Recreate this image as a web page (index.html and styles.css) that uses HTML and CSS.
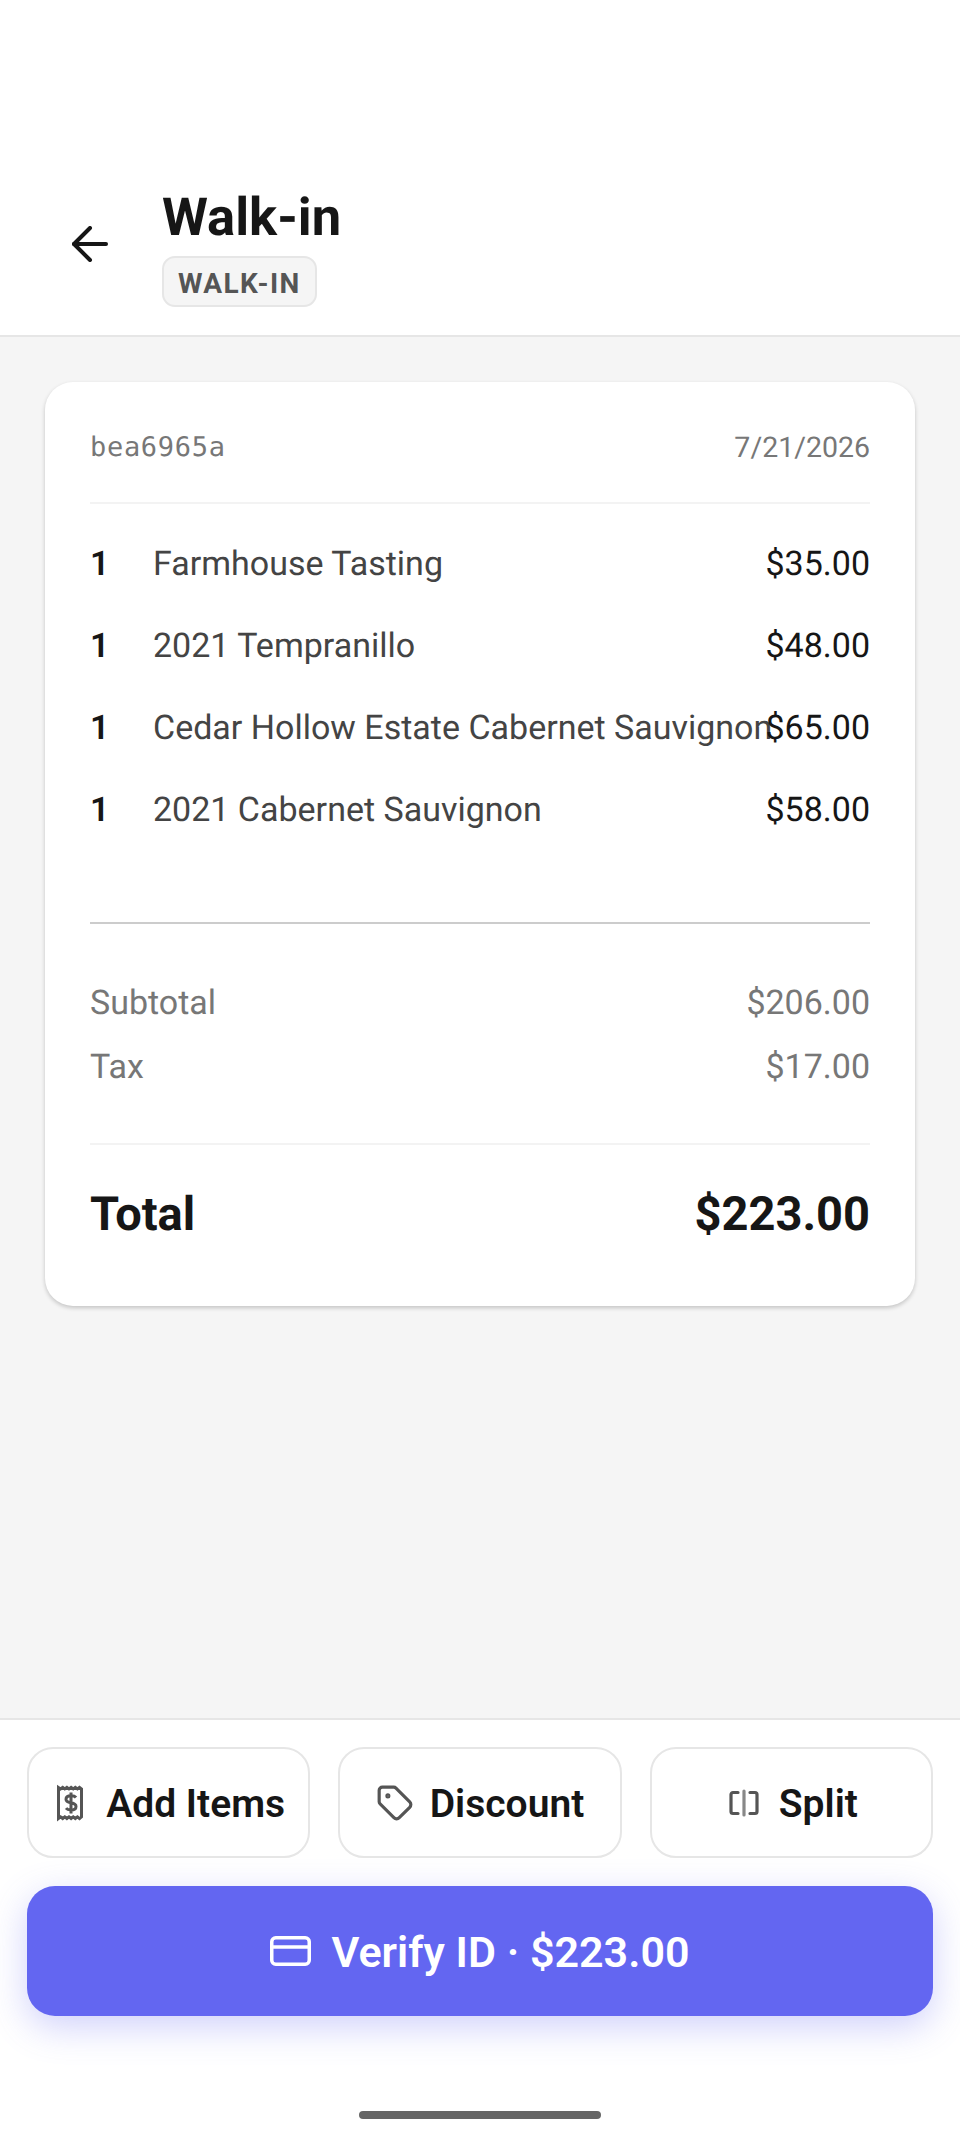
FILE: index.html
```html
<!DOCTYPE html>
<html lang="en">
    <head>
        <meta charset="UTF-8">
        <meta name="viewport" content="width=device-width, initial-scale=1.0">
        <title>Walk-in</title>
        <link rel="stylesheet" href="styles.css">
    </head>
    <body>
        <div class="screen">

            <!-- header -->
            <header class="top-bar">
                <svg class="back-icon" viewBox="0 0 36 36" fill="none" stroke="#161616" stroke-width="4" stroke-linecap="round" stroke-linejoin="round">
                    <path d="M34 18H2"/>
                    <path d="M18 2 2 18l16 16"/>
                </svg>
                <div class="top-text">
                    <h1>Walk-in</h1>
                    <span class="badge">WALK-IN</span>
                </div>
            </header>

            <!-- receipt -->
            <main class="content">
                <section class="card">
                    <div class="card-head">
                        <span class="order-id">bea6965a</span>
                        <span class="order-date">7/21/2026</span>
                    </div>

                    <ul class="items">
                        <li class="item"><span class="qty">1</span><span class="name">Farmhouse Tasting</span><span class="price">$35.00</span></li>
                        <li class="item"><span class="qty">1</span><span class="name">2021 Tempranillo</span><span class="price">$48.00</span></li>
                        <li class="item"><span class="qty">1</span><span class="name">Cedar Hollow Estate Cabernet Sauvignon</span><span class="price">$65.00</span></li>
                        <li class="item"><span class="qty">1</span><span class="name">2021 Cabernet Sauvignon</span><span class="price">$58.00</span></li>
                    </ul>

                    <div class="sums">
                        <div class="sum-row"><span>Subtotal</span><span>$206.00</span></div>
                        <div class="sum-row"><span>Tax</span><span>$17.00</span></div>
                    </div>

                    <div class="total-row"><span>Total</span><span>$223.00</span></div>
                </section>
            </main>

            <!-- actions -->
            <footer class="actions">
                <div class="action-row">
                    <button class="action">
                        <svg class="action-icon" viewBox="-5 -2 38 38" fill="none" stroke="#555" stroke-width="3">
                            <path d="M1.500 1.500v31l2.100-1.600 2.100 1.600 2.100-1.600 2.100 1.600 2.100-1.600 2.100 1.600 2.100-1.600 2.100 1.600 2.100-1.600 2.100 1.600 2-1.600v-28l-2-1.600-2.100 1.600-2.100-1.600-2.100 1.600-2.100-1.600-2.100 1.600-2.100-1.600-2.100 1.600-2.100-1.600-2.100 1.600z"/>
                            <path d="M19 11.500c-1-1.300-2.800-1.800-5-1.800-2.800 0-5 1.300-5 3.500s2.200 3 5 3.600 5 1.400 5 3.600-2.200 3.500-5 3.500c-2.200 0-4-.5-5-1.800M14 6.500v21"/>
                        </svg>
                        Add Items
                    </button>
                    <button class="action">
                        <svg class="action-icon" viewBox="0 0 24 24" fill="none" stroke="#555" stroke-width="2" stroke-linecap="round" stroke-linejoin="round">
                            <path d="M12.600 2.600A2 2 0 0 0 11.200 2H4a2 2 0 0 0-2 2v7.200a2 2 0 0 0 .6 1.400l8.700 8.700a2.400 2.400 0 0 0 3.400 0l6.600-6.600a2.400 2.400 0 0 0 0-3.400z"/>
                            <circle cx="7.500" cy="7.500" r=".6" fill="#555"/>
                        </svg>
                        Discount
                    </button>
                    <button class="action">
                        <svg class="action-icon" viewBox="-4 -6 38 38" fill="none" stroke="#555" stroke-width="3.200" stroke-linecap="round" stroke-linejoin="round">
                            <path d="M9 2.500H4a2 2 0 0 0-2 2v17a2 2 0 0 0 2 2h5"/>
                            <path d="M21 2.500h5a2 2 0 0 1 2 2v17a2 2 0 0 1-2 2h-5"/>
                            <path d="M15 1v24" stroke="#888"/>
                        </svg>
                        Split
                    </button>
                </div>
                <button class="verify">
                    <svg class="icon-card" viewBox="0 0 41 30" fill="none" stroke="#fff" stroke-width="3.500" stroke-linejoin="round">
                        <rect x="1.750" y="1.750" width="37.500" height="26.500" rx="4"/>
                        <path d="M1.750 11h37.500"/>
                    </svg>
                    Verify ID · $223.00
                </button>
                <div class="home-pill"></div>
            </footer>

        </div>
    </body>
</html>
```

FILE: styles.css
```css
* {
    box-sizing: border-box;
}

body {
    font-family: 'Roboto', 'Liberation Sans', sans-serif;
    margin: 0;
    padding: 0;
    background-color: #fff;
    color: #161616;
    text-rendering: geometricPrecision;
}

.screen {
    display: flex;
    flex-direction: column;
    height: 2142px;
}

/* header */
.top-bar {
    display: flex;
    align-items: flex-end;
    height: 337px;
    padding: 0 0 28px 72px;
    border-bottom: 2px solid #e6e6e6;
    background-color: #fff;
}

.back-icon {
    width: 36px;
    height: 36px;
    margin: 0 54px 45px 0;
}

.top-text {
    display: flex;
    flex-direction: column;
    align-items: flex-start;
}

h1 {
    margin: 0 0 9px;
    font-size: 52.5px;
    line-height: 60px;
    font-weight: 700;
}

.badge {
    padding: 0 14px;
    height: 51px;
    line-height: 51px;
    font-size: 28px;
    font-weight: 700;
    letter-spacing: 1.4px;
    color: #555;
    background-color: #f5f5f5;
    border: 2px solid #e6e6e6;
    border-radius: 13px;
}

/* receipt */
.content {
    flex: 1;
    padding: 45px 45px 0;
    background-color: #f5f5f5;
}

.card {
    height: 924px;
    padding: 0 45px;
    background-color: #fff;
    border-radius: 28px;
    box-shadow: 0 2px 4px rgba(0, 0, 0, 0.2);
}

.card-head {
    display: flex;
    justify-content: space-between;
    align-items: center;
    height: 122px;
    padding-top: 11px;
    border-bottom: 2px solid #f3f3f3;
    color: #777;
}

.order-id {
    font-family: 'DejaVu Sans Mono', monospace;
    font-size: 27px;
    letter-spacing: 0.7px;
}

.order-date {
    font-size: 28.5px;
}

.items {
    list-style: none;
    margin: 0;
    padding: 19px 0 71px;
    border-bottom: 2px solid #ccc;
}

.item {
    display: flex;
    align-items: center;
    height: 82px;
    font-size: 34px;
}

.qty {
    width: 63px;
    flex-shrink: 0;
    font-weight: 600;
}

.name {
    flex: 1;
    min-width: 0;
    white-space: nowrap;
    color: #444;
}

.price {
    font-weight: 450;
    font-size: 34px;
}

.sums {
    padding: 47px 0 44px;
    border-bottom: 2px solid #f3f3f3;
}

.sum-row {
    display: flex;
    justify-content: space-between;
    align-items: center;
    height: 64px;
    font-size: 34px;
    color: #777;
}

.total-row {
    display: flex;
    justify-content: space-between;
    align-items: center;
    height: 136px;
    padding-top: 2px;
    font-size: 47px;
    font-weight: 700;
}

/* actions */
.actions {
    display: flex;
    flex-direction: column;
    height: 424px;
    padding: 27px 27px 0;
    border-top: 2px solid #e6e6e6;
    background-color: #fff;
}

.action-row {
    display: flex;
    gap: 28px;
    margin-bottom: 28px;
}

.action {
    flex: 1;
    display: flex;
    justify-content: center;
    align-items: center;
    gap: 16px;
    height: 111px;
    padding: 2px 0 0;
    font-family: inherit;
    font-size: 39px;
    font-weight: 580;
    color: #161616;
    background-color: #fff;
    border: 2px solid #e6e6e6;
    border-radius: 26px;
}

.action-icon {
    width: 38px;
    height: 38px;
    margin-top: -2px;
}

.verify {
    display: flex;
    justify-content: center;
    align-items: center;
    gap: 20px;
    height: 130px;
    padding: 2px 0 0;
    font-family: inherit;
    font-size: 43px;
    font-weight: 600;
    color: #fff;
    background-color: #6366f1;
    border: none;
    border-radius: 28px;
    box-shadow: 0 11px 36px rgba(99, 102, 241, 0.3);
}

.icon-card {
    width: 41px;
    height: 30px;
    margin-top: -2px;
}

.home-pill {
    align-self: center;
    width: 242px;
    height: 8px;
    margin-top: 95px;
    background-color: #666;
    border-radius: 4px;
}
```
